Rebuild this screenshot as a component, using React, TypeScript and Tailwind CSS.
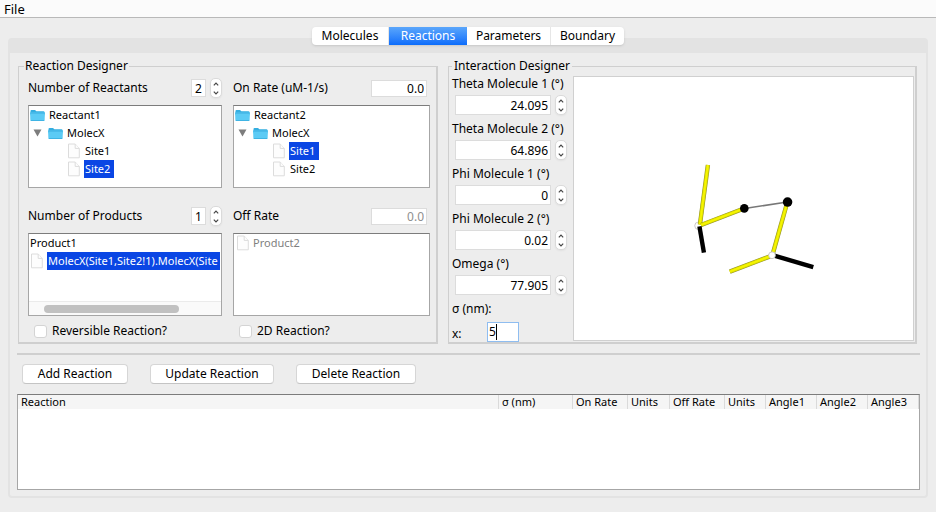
import { useId, type ReactNode } from "react";

function Chevrons() {
  return (
    <span className="flex h-5 w-3 shrink-0 flex-col overflow-hidden rounded-[5px] border border-[#dadada] bg-white shadow-xs">
      <button type="button" aria-label="Increase" className="flex flex-1 items-center justify-center">
        <svg width="6" height="4" viewBox="0 0 6 4" fill="none" stroke="#484848" strokeWidth="1.2">
          <path d="M0.8 3.3 3 1 5.2 3.3" />
        </svg>
      </button>
      <button type="button" aria-label="Decrease" className="flex flex-1 items-center justify-center">
        <svg width="6" height="4" viewBox="0 0 6 4" fill="none" stroke="#484848" strokeWidth="1.2">
          <path d="M0.8 0.7 3 3 5.2 0.7" />
        </svg>
      </button>
    </span>
  );
}

function FolderIcon() {
  return (
    <svg width="15" height="13" viewBox="0 0 15 13" className="shrink-0">
      <path d="M0.5 2Q0.5 1 1.5 1H5L6.4 2.2H13.5Q14.5 2.2 14.5 3.2V6H0.5Z" fill="#35aee0" />
      <path d="M0 3.6H15L14.6 11.2Q14.5 12 13.6 12H1.4Q0.5 12 0.4 11.2Z" fill="#5ccbf5" />
      <path d="M0.2 4.1H14.8" stroke="#41b3e3" />
      <path d="M0.8 11.5H14.2" stroke="#3fb4e4" />
    </svg>
  );
}

function FileIcon() {
  return (
    <svg width="12" height="16" viewBox="0 0 12 16" className="shrink-0" fill="#fdfdfd" stroke="#dcdcdc">
      <path d="M0.5 1H7.2L11.3 5.4V14.8H0.5Z" />
      <path d="M7.2 1V5.4H11.3" />
    </svg>
  );
}

function Triangle() {
  return (
    <svg width="9" height="8" viewBox="0 0 9 8" className="shrink-0">
      <path d="M0.5 0.5H8.5L4.5 7.5Z" fill="#7d7d7d" />
    </svg>
  );
}

function TreeBox({ children }: { children: ReactNode }) {
  return (
    <div className="mt-[7px] flex h-[83px] flex-col overflow-hidden border border-[#a6a6a6] border-t-[#7c7c7c] bg-white">
      {children}
    </div>
  );
}

function ReactantTree({ name, selected }: { name: string; selected: string }) {
  return (
    <TreeBox>
      <ul role="tree" className="text-[11px] leading-[18px]">
        <li className="flex h-[18px] items-center gap-1 pl-px">
          <FolderIcon />
          {name}
        </li>
        <li className="flex h-[18px] items-center pl-1">
          <Triangle />
          <span className="ml-1.5 flex items-center gap-1">
            <FolderIcon />
            MolecX
          </span>
        </li>
        {["Site1", "Site2"].map((site) => (
          <li key={site} className="flex h-[18px] items-center gap-1 pl-[39px]">
            <FileIcon />
            <span className={site === selected ? "bg-[#0a46e4] pr-1 pl-px text-white" : "pl-px"}>{site}</span>
          </li>
        ))}
      </ul>
    </TreeBox>
  );
}

function CountRow({ label, value }: { label: string; value: string }) {
  const id = useId();
  return (
    <div className="flex h-5 items-center">
      <label htmlFor={id} className="flex-1">{label}</label>
      <input id={id} defaultValue={value} className="mr-1 h-[18px] w-[15px] border border-[#dcdcdc] bg-white text-center outline-none" />
      <Chevrons />
    </div>
  );
}

function RateRow({ label, value, disabled }: { label: string; value: string; disabled?: boolean }) {
  const id = useId();
  return (
    <div className="flex h-5 items-center justify-between pr-[3px]">
      <label htmlFor={id}>{label}</label>
      <input
        id={id}
        defaultValue={value}
        disabled={disabled}
        className="h-[17px] w-14 border border-[#dcdcdc] bg-white pr-0.5 text-right outline-none disabled:text-[#8f8f8f]"
      />
    </div>
  );
}

function Check({ label }: { label: string }) {
  return (
    <label className="mt-1.5 flex h-[18px] items-center gap-[5px] pl-1.5">
      <input type="checkbox" className="size-[13px] appearance-none rounded-[3px] border border-[#d4d4d4] bg-white" />
      {label}
    </label>
  );
}

function AngleField({ label, value }: { label: string; value: string }) {
  const id = useId();
  return (
    <div className="h-[45px]">
      <label htmlFor={id} className="block h-5 leading-5 whitespace-nowrap">{label}</label>
      <div className="mt-px ml-[3px] flex items-center gap-1">
        <input id={id} defaultValue={value} className="h-5 w-24 border border-[#dcdcdc] bg-white pr-0.5 text-right outline-none" />
        <Chevrons />
      </div>
    </div>
  );
}

function Rod({ d, color }: { d: string; color: "yellow" | "black" }) {
  if (color === "black") return <path d={d} stroke="#000" strokeWidth="4.4" />;
  return (
    <>
      <path d={d} stroke="#8d8d2a" strokeWidth="4.4" />
      <path d={d} stroke="#e2e200" strokeWidth="3.4" />
      <path d={d} stroke="#f6f600" strokeWidth="1.6" />
    </>
  );
}

function MoleculeView() {
  return (
    <svg width="340" height="263" viewBox="573 77 340 263" fill="none" role="img" aria-label="Interaction geometry">
      <path d="M744 208.500 787 202" stroke="#777" strokeWidth="1.6" />
      <circle cx="697.800" cy="225.800" r="3.700" fill="#fff" stroke="#bbb" strokeWidth="0.800" />
      <Rod d="M707.300 164.800 699.300 224.500" color="yellow" />
      <Rod d="M700.500 225 743.500 208.500" color="yellow" />
      <Rod d="M698.800 226.500 703.300 252.700" color="black" />
      <Rod d="M787 202 772.500 253.500" color="yellow" />
      <Rod d="M771 256 729.300 271.800" color="yellow" />
      <Rod d="M773 255.500 813 267.200" color="black" />
      <circle cx="771.600" cy="255.400" r="3.400" fill="#fff" stroke="#bbb" strokeWidth="0.800" />
      <circle cx="743.800" cy="208.400" r="4.300" fill="#000" />
      <circle cx="787.200" cy="202" r="4.800" fill="#000" />
    </svg>
  );
}

const tabs = [
  { name: "Molecules", width: "w-[77px]" },
  { name: "Reactions", width: "w-[78px]" },
  { name: "Parameters", width: "w-[84px]" },
  { name: "Boundary", width: "w-[73px]" },
];

const columns = [
  { name: "Reaction", width: "" },
  { name: "σ (nm)", width: "w-[74px]" },
  { name: "On Rate", width: "w-[55px]" },
  { name: "Units", width: "w-[42px]" },
  { name: "Off Rate", width: "w-[55px]" },
  { name: "Units", width: "w-[41px]" },
  { name: "Angle1", width: "w-[51px]" },
  { name: "Angle2", width: "w-[51px]" },
  { name: "Angle3", width: "w-[51px]" },
];

const angles = [
  ["Theta Molecule 1 (°)", "24.095"],
  ["Theta Molecule 2 (°)", "64.896"],
  ["Phi Molecule 1 (°)", "0"],
  ["Phi Molecule 2 (°)", "0.02"],
  ["Omega (°)", "77.905"],
];

const actions = [
  { name: "Add Reaction", width: "w-[106px]" },
  { name: "Update Reaction", width: "w-[124px]" },
  { name: "Delete Reaction", width: "w-[120px]" },
];

const groupClass = "border border-r-2 border-b-2 border-[#cfcfcf]";

export default function App() {
  return (
    <div className="flex min-h-screen flex-col bg-[#ededed] font-['Noto_Sans',sans-serif] text-[12px] leading-4 text-black">
      <header className="flex h-[18px] items-center border-b border-[#b9b9b9] bg-[#fbfbfb] pl-1">
        <button type="button" className="text-[13px] leading-4">File</button>
      </header>

      <nav role="tablist" className="relative mt-[9px] flex h-[18px] justify-center">
        <div className="flex overflow-hidden rounded-[4px] bg-white shadow-sm">
          {tabs.map((tab) => (
            <button
              key={tab.name}
              type="button"
              role="tab"
              aria-selected={tab.name === "Reactions"}
              className={`${tab.width} ${tab.name === "Reactions" ? "bg-linear-to-b from-[#5aa6fb] to-[#0a6cfb] text-white" : "border-r border-[#e6e6e6] last:border-r-0"}`}
            >
              {tab.name}
            </button>
          ))}
        </div>
      </nav>

      <main className="mx-2 -mt-[7px] mb-3.5 flex flex-1 flex-col rounded-[4px] border-2 border-[#e3e3e3]">
        <div className="h-[13px] bg-[#e3e3e3]" />
        <div className="flex flex-1 flex-col pt-[5px] pr-1.5 pb-1.5 pl-[7px]">
          <div className="flex gap-2.5 pr-[3px] pl-px">
            <fieldset className={`${groupClass} w-[420px] shrink-0 pr-1.5 pb-0.5 pl-[9px]`}>
              <legend className="-ml-1 h-4 px-px">Reaction Designer</legend>
              <div className="grid grid-cols-[194fr_197fr] gap-x-[11px] pt-1">
                <div className="min-w-0">
                  <CountRow label="Number of Reactants" value="2" />
                  <ReactantTree name="Reactant1" selected="Site2" />
                </div>
                <div className="min-w-0">
                  <RateRow label="On Rate (uM-1/s)" value="0.0" />
                  <ReactantTree name="Reactant2" selected="Site1" />
                </div>
                <div className="mt-[18px] min-w-0">
                  <CountRow label="Number of Products" value="1" />
                  <TreeBox>
                    <ul role="tree" className="flex-1 pr-px text-[11px] leading-[18px]">
                      <li className="h-[18px] pl-px">Product1</li>
                      <li className="flex h-[18px] items-center gap-1 pl-0.5">
                        <FileIcon />
                        <span className="flex-1 bg-[#0a46e4] pl-px whitespace-nowrap text-white">
                          MolecX(Site1,Site2!1).MolecX(Site
                        </span>
                      </li>
                    </ul>
                    <div className="flex h-[14px] items-center border-t border-[#ebebeb] bg-[#fafafa] pl-[15px]">
                      <div className="h-2 w-[135px] rounded-full bg-[#c1c1c1]" />
                    </div>
                  </TreeBox>
                  <Check label="Reversible Reaction?" />
                </div>
                <div className="mt-[18px] min-w-0">
                  <RateRow label="Off Rate" value="0.0" disabled />
                  <TreeBox>
                    <ul role="tree" className="text-[11px] leading-[18px] text-[#7f7f7f]">
                      <li className="flex h-[18px] items-center gap-1 pl-[3px]">
                        <FileIcon />
                        Product2
                      </li>
                    </ul>
                  </TreeBox>
                  <Check label="2D Reaction?" />
                </div>
              </div>
            </fieldset>

            <fieldset className={`${groupClass} min-w-0 flex-1 pr-px pl-[3px]`}>
              <legend className="h-4 px-0.5">Interaction Designer</legend>
              <div className="flex">
                <div className="w-[121px] shrink-0">
                  {angles.map(([label, value]) => (
                    <AngleField key={label} label={label} value={value} />
                  ))}
                  <p className="h-5 leading-5">σ (nm):</p>
                  <div className="mt-[3px] flex h-5 items-end">
                    <label htmlFor="sigma-x" className="w-[35px]">x:</label>
                    <div className="flex h-5 w-8 items-center border border-[#8fbdf0] bg-white pl-px">
                      <input id="sigma-x" defaultValue="5" className="w-[7px] bg-transparent outline-none" />
                      <span className="h-4 w-px bg-black" />
                    </div>
                  </div>
                </div>
                <div className="mt-0.5 mb-px flex flex-1 items-center justify-center overflow-hidden border border-[#d0d0d0] bg-white">
                  <MoleculeView />
                </div>
              </div>
            </fieldset>
          </div>

          <hr className="mt-[9px] h-0.5 border-0 bg-[#cfcfcf]" />

          <div className="mt-[9px] flex gap-[22px] pl-[5px]">
            {actions.map((action) => (
              <button
                key={action.name}
                type="button"
                className={`${action.width} h-5 rounded-[4px] border border-[#d6d6d6] border-b-[#c4c4c4] bg-white`}
              >
                {action.name}
              </button>
            ))}
          </div>

          <div className="mt-2.5 flex-1 border border-[#a6a6a6] border-t-[#7c7c7c] bg-white">
            <table className="w-full table-fixed text-left text-[11px] leading-[14px]">
              <thead>
                <tr className="bg-[#f5f5f5]">
                  {columns.map((column, index) => (
                    <th
                      key={index}
                      scope="col"
                      className={`${column.width} border-[#dadada] pl-[3px] font-normal not-first:border-l last:border-r`}
                    >
                      {column.name}
                    </th>
                  ))}
                </tr>
              </thead>
              <tbody />
            </table>
          </div>
        </div>
      </main>
    </div>
  );
}
